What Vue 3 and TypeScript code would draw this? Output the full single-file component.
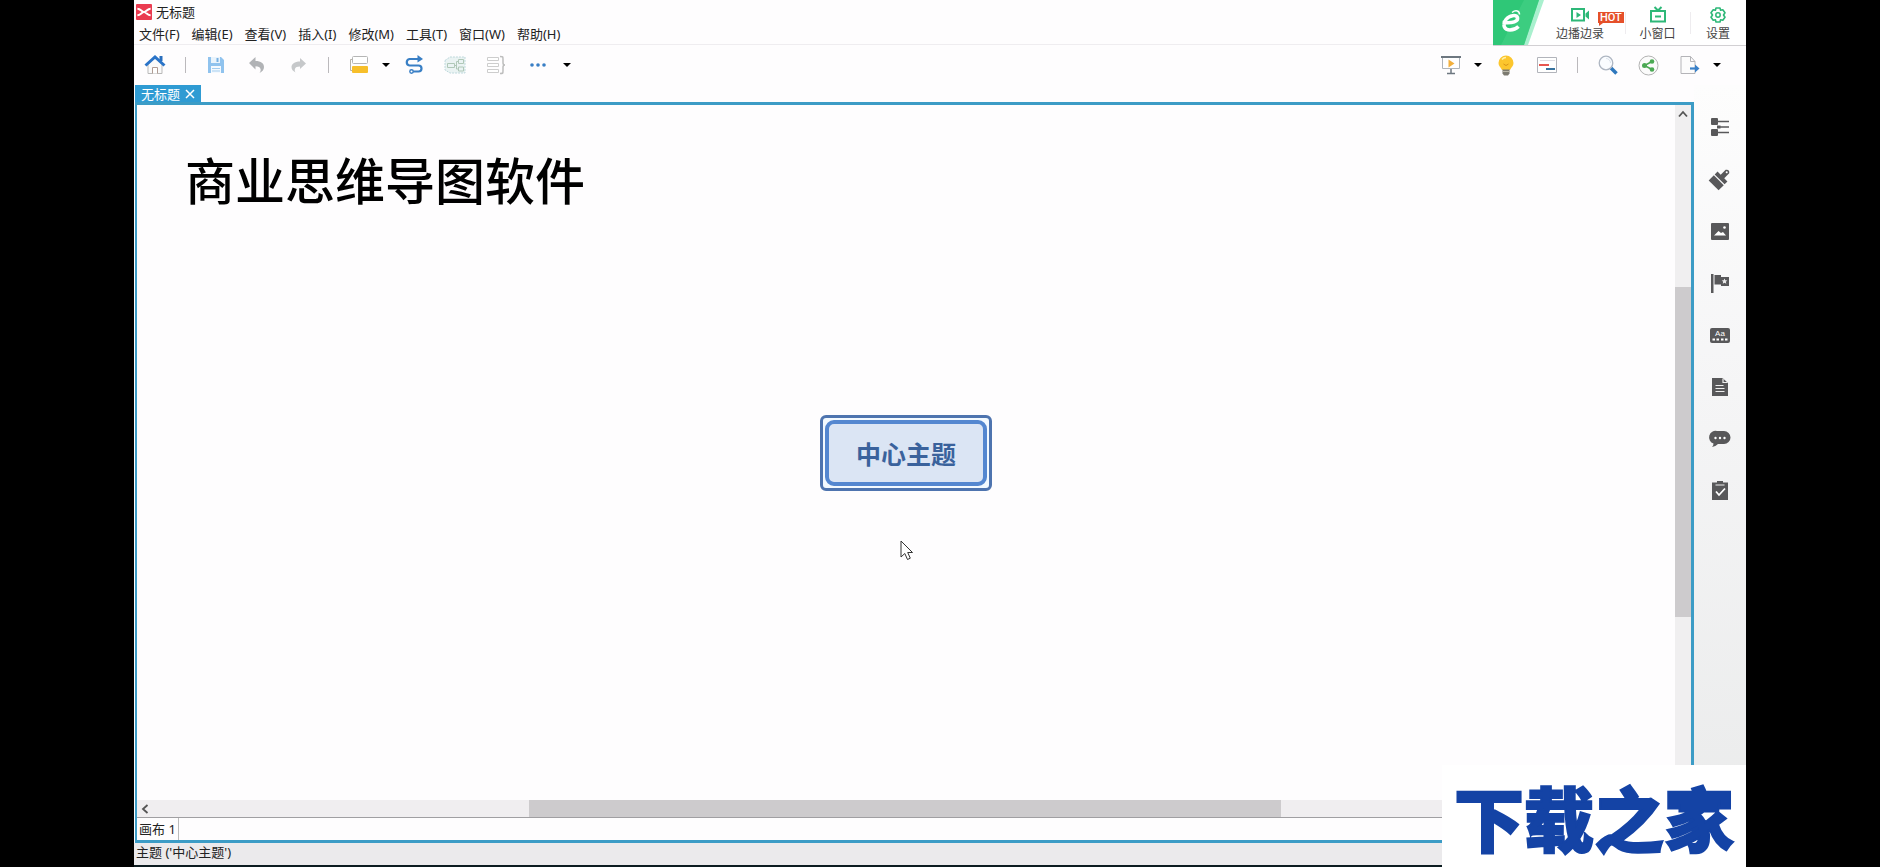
<script setup lang="ts">
interface SideTool {
  id: string
  label: string
}

const menus: string[] = ['文件(F)', '编辑(E)', '查看(V)', '插入(I)', '修改(M)', '工具(T)', '窗口(W)', '帮助(H)']

const sideTools: SideTool[] = [
  { id: 'outline', label: '大纲' },
  { id: 'format', label: '格式' },
  { id: 'image', label: '图片' },
  { id: 'marker', label: '图标' },
  { id: 'label', label: '标签' },
  { id: 'note', label: '备注' },
  { id: 'comment', label: '批注' },
  { id: 'task', label: '任务' },
]
</script>

<template>
  <div class="screen">
    <div class="window">
      <header class="titlebar">
        <svg class="logo" viewBox="0 0 17 17" aria-hidden="true">
          <rect width="17" height="17" rx="1" fill="#ea3b50" />
          <path d="M1.500 5C5 5 6 8.500 8.500 8.500S12 5 15.500 5M1.500 12C5 12 6 8.500 8.500 8.500S12 12 15.500 12" fill="none" stroke="#fff" stroke-width="2.200" />
        </svg>
        <span>无标题</span>
      </header>

      <nav class="menubar" aria-label="菜单">
        <button v-for="menu in menus" :key="menu" type="button">{{ menu }}</button>
      </nav>

      <div class="toolbar">
        <button class="tool" type="button" aria-label="主页">
          <svg width="22" height="22" viewBox="0 0 22 22">
            <path d="M4 10v9.500h14V10L11 4z" fill="#fafafa" stroke="#b9b9b9" />
            <path d="M8.500 19.500v-6h5v6" fill="#fff" stroke="#b09c94" />
            <path d="M15.500 2h3v5h-3z" fill="#2a6fbd" />
            <path d="M1.500 11.500 11 3l9.500 8.500" fill="none" stroke="#2a74c8" stroke-width="3" />
          </svg>
        </button>
        <span class="sep"></span>
        <button class="tool" type="button" aria-label="保存">
          <svg width="18" height="18" viewBox="0 0 18 18">
            <path d="M1 1h13l3 3v13H1z" fill="#90c3ee" />
            <path d="M4 1h9v6H4z" fill="#eaf4fc" />
            <path d="M9.500 2h2v4h-2z" fill="#78b1e2" />
            <path d="M4 10h10v7H4z" fill="#f4f9fe" />
            <path d="M5 12.500h8M5 15h8" stroke="#a3cdef" />
          </svg>
        </button>
        <button class="tool" type="button" aria-label="撤销">
          <svg width="18" height="18" viewBox="0 0 18 18">
            <path d="M1 7 7.500 1v4C13 5 16 7.500 16 11c0 2.500-1.500 4.500-4.500 6 1-1.500 1.500-2.500 1-4-.5-1.800-2-2.800-5-2.800V13.500z" fill="#b1b3b6" />
          </svg>
        </button>
        <button class="tool" type="button" aria-label="重做">
          <svg width="18" height="18" viewBox="0 0 18 18">
            <path d="M17 7.500 11 2v3.500C5.500 5.500 2.500 8 2.500 11c0 2.500 1.500 4 4 5.500-.8-1.500-1-2.500-.5-3.700.6-1.500 2-2.300 5-2.300V13z" fill="#c6c8ca" />
          </svg>
        </button>
        <span class="sep"></span>
        <button class="tool" type="button" aria-label="主题">
          <svg width="20" height="20" viewBox="0 0 20 20">
            <path d="M3 4.500H1.500v11H3" fill="none" stroke="#b7b3a9" />
            <rect x="3.500" y="1.500" width="15" height="7" rx="1" fill="#fff" stroke="#b5b5b5" />
            <rect x="3" y="11" width="16" height="7" rx="1" fill="#f7bf2b" />
          </svg>
        </button>
        <button class="drop" type="button" aria-label="主题选项"><svg width="8" height="4" viewBox="0 0 8 4"><path d="M0 0h8L4 4z" /></svg></button>
        <button class="tool" type="button" aria-label="联系">
          <svg width="20" height="20" viewBox="0 0 20 20">
            <path d="M14 4H5.500a3.300 3.300 0 0 0 0 6.500h9a3 3 0 0 1 0 6H9" fill="none" stroke="#397fc5" stroke-width="2.200" />
            <path d="m13.500 0 5.500 4-5.500 3.500z" fill="#397fc5" />
            <circle cx="7.500" cy="16.500" r="1.700" fill="#fff" stroke="#397fc5" stroke-width="1.400" />
          </svg>
        </button>
        <button class="tool" type="button" aria-label="外框">
          <svg width="22" height="18" viewBox="0 0 22 18">
            <path d="M1 4.500 6 1h15v16H6l-5-3z" fill="#eaf3f3" stroke="#bed8dc" stroke-dasharray="2 1" />
            <path d="M3.500 7.500h7v4h-7zM14.500 3.500h5v4h-5zM14.500 11h5v4h-5zM10.500 9.500h2m2-4h-2V13h2" fill="none" stroke="#b0c8b8" />
          </svg>
        </button>
        <button class="tool" type="button" aria-label="概要">
          <svg width="20" height="20" viewBox="0 0 20 20">
            <path d="M1.500 2.500h11v3h-11zM1.500 8.500h11v3h-11zM1.500 14.500h11v3h-11z" fill="#fff" stroke="#cdcdcd" />
            <path d="M14 1.500c3 0 3 0 3 3V8c0 1.500.5 2 2 2-1.500 0-2 .5-2 2v3.500c0 3 0 3-3 3" fill="none" stroke="#bdbdbd" stroke-width="1.500" />
          </svg>
        </button>
        <button class="tool more" type="button" aria-label="更多">
          <svg width="16" height="4" viewBox="0 0 16 4" fill="#397fc5"><circle cx="2" cy="2" r="1.800" /><circle cx="8" cy="2" r="1.800" /><circle cx="14" cy="2" r="1.800" /></svg>
        </button>
        <button class="drop" type="button" aria-label="更多选项"><svg width="8" height="4" viewBox="0 0 8 4"><path d="M0 0h8L4 4z" /></svg></button>

        <span class="spacer"></span>

        <button class="tool" type="button" aria-label="演示">
          <svg width="20" height="20" viewBox="0 0 20 20">
            <path d="M1.500 2.500h17v11h-17z" fill="#fff" stroke="#aeb4ba" />
            <path d="M0 1h20v2H0z" fill="#6d7780" />
            <path d="M10 14v4M6 18.500h8" stroke="#6d7780" stroke-width="1.500" />
            <path d="m7.500 4.500 6 4-6 4z" fill="#f3b03d" />
          </svg>
        </button>
        <button class="drop" type="button" aria-label="演示选项"><svg width="8" height="4" viewBox="0 0 8 4"><path d="M0 0h8L4 4z" /></svg></button>
        <button class="tool" type="button" aria-label="头脑风暴">
          <svg width="18" height="21" viewBox="0 0 18 21">
            <path d="M9 .5a7.500 7.500 0 0 1 7.500 7.500c0 3-2 4-3.500 7H5C3.500 12 1.500 11 1.500 8A7.500 7.500 0 0 1 9 .5z" fill="#fcc62d" />
            <path d="M5 4.500C6 3 7.500 2.500 9 2.500" fill="none" stroke="#fff0a8" stroke-width="1.500" />
            <path d="m6.500 9 2.500 1.500L11.500 9" fill="none" stroke="#d99518" />
            <path d="M5.500 14.500h7v4L11 20.500H7l-1.500-2z" fill="#7c7a70" />
            <path d="M5.500 16.500h7" stroke="#b9b6a8" />
          </svg>
        </button>
        <button class="tool" type="button" aria-label="甘特图">
          <svg width="20" height="18" viewBox="0 0 20 18">
            <path d="M.5 1.500h19v15H.5z" fill="#fff" stroke="#b2b4bb" />
            <path d="M3 4.500h15" stroke="#dedee4" />
            <path d="M2 9h10" stroke="#e65650" stroke-width="2" />
            <path d="M9 13h9" stroke="#37739f" stroke-width="2" />
          </svg>
        </button>
        <span class="sep"></span>
        <button class="tool" type="button" aria-label="搜索">
          <svg width="20" height="20" viewBox="0 0 20 20">
            <path d="m13 13 5.500 5.500" stroke="#2f78bd" stroke-width="3.500" />
            <circle cx="8" cy="8" r="6.800" fill="#fafcff" stroke="#aeb6c2" stroke-width="1.300" />
            <path d="M8 3.500A4.500 4.500 0 0 1 12.500 8" fill="none" stroke="#dce3ec" />
          </svg>
        </button>
        <button class="tool" type="button" aria-label="分享">
          <svg width="21" height="21" viewBox="0 0 21 21">
            <circle cx="10.500" cy="10.500" r="9.500" fill="#fbfbfb" stroke="#b3b3b3" />
            <path d="M14 6.500 6.500 10.500 14 14.500" fill="none" stroke="#4ba954" stroke-width="1.500" />
            <g fill="#4ba954"><circle cx="14" cy="6.500" r="2.300" /><circle cx="6.500" cy="10.500" r="2.500" /><circle cx="14" cy="14.500" r="2.300" /></g>
          </svg>
        </button>
        <button class="tool" type="button" aria-label="导出">
          <svg width="20" height="20" viewBox="0 0 20 20">
            <path d="M1 1.500h9.500l4.500 5v12H1zM10.500 1.500v5H15" fill="#fcfcfc" stroke="#b4b4b8" />
            <path d="M10 13.500h6" stroke="#3980c8" stroke-width="2.200" />
            <path d="m15 9.500 4.500 4-4.500 4z" fill="#3980c8" />
          </svg>
        </button>
        <button class="drop" type="button" aria-label="导出选项"><svg width="8" height="4" viewBox="0 0 8 4"><path d="M0 0h8L4 4z" /></svg></button>
      </div>

      <div class="body">
        <main class="editor">
          <div class="tabs">
            <div class="tab">
              <span>无标题</span>
              <button type="button" aria-label="关闭"><svg width="8" height="8" viewBox="0 0 8 8"><path d="m0 0 8 8M8 0 0 8" stroke="#fff" stroke-width="1.500" /></svg></button>
            </div>
          </div>
          <div class="frame">
            <div class="work">
              <section class="canvas">
                <h1>商业思维导图软件</h1>
                <div class="topic"><div class="topic-inner">中心主题</div></div>
                <svg class="cursor" width="14" height="21" viewBox="0 0 14 21" aria-hidden="true">
                  <path d="M1 1v16l3.800-3.500L7.500 19.500l2.800-1.300-2.600-5.700H12.500z" fill="#fff" stroke="#333" />
                </svg>
              </section>
              <div class="vscroll">
                <button type="button" aria-label="向上滚动"><svg width="8" height="6" viewBox="0 0 8 6"><path d="m0 5.500 4-4.500 4 4.500" fill="none" stroke="#555" stroke-width="1.800" /></svg></button>
                <div class="vtrack"><div class="vbefore"></div><div class="vthumb"></div><div class="vafter"></div></div>
              </div>
            </div>
            <div class="hscroll">
              <button type="button" aria-label="向左滚动"><svg width="6" height="8" viewBox="0 0 6 8"><path d="M5.500 0 1 4l4.500 4" fill="none" stroke="#555" stroke-width="1.800" /></svg></button>
              <div class="htrack"><div class="hbefore"></div><div class="hthumb"></div><div class="hafter"></div></div>
            </div>
            <div class="sheets"><button type="button">画布 1</button></div>
          </div>
        </main>

        <aside class="side">
          <button v-for="tool in sideTools" :key="tool.id" type="button" :aria-label="tool.label">
            <svg width="20" height="20" viewBox="0 0 20 20">
              <g v-if="tool.id === 'outline'" fill="#58585a">
                <rect x="1" y="1" width="7" height="7" rx="1" /><rect x="1" y="12" width="7" height="7" rx="1" /><rect x="7" y="8.500" width="3.500" height="3" />
                <path d="M8 4.500h11M10 10h9M8 15.500h11" stroke="#58585a" stroke-width="1.500" />
              </g>
              <g v-else-if="tool.id === 'format'" transform="rotate(45 10 10)" fill="#58585a">
                <path d="M7.500-.5Q10-4 12.500-.5v7H17v4H3v-4h4.500z" /><path d="M3 11.700h14V19H3z" /><circle cx="10" cy=".5" r="1" fill="#fff" />
              </g>
              <g v-else-if="tool.id === 'image'">
                <rect x="1" y="2" width="18" height="17" rx="1" fill="#58585a" /><path d="m4 14.500 4.500-4.500 2.500 2 2-1 3 3.500z" fill="#fff" /><circle cx="14.500" cy="6.500" r="1.300" fill="#fff" />
              </g>
              <g v-else-if="tool.id === 'marker'">
                <path d="M1 1h2.500v19H1zM4.500 2H11v2h8v9h-8v-1.500H4.500z" fill="#58585a" /><path d="m14.500 5.500.8 1.800 2 .2-1.500 1.300.5 2-1.800-1-1.800 1 .5-2-1.500-1.300 2-.2z" fill="#eee" />
              </g>
              <g v-else-if="tool.id === 'label'">
                <rect y="3" width="20" height="15" rx="2" fill="#58585a" />
                <text x="10" y="11" text-anchor="middle" font-family="Liberation Sans, sans-serif" font-size="8" fill="#fff">Aa</text>
                <path d="M2.500 14.500H5m1.500 0H9m2 0h2.500m1.500 0h2.500" stroke="#fff" stroke-width="1.800" />
              </g>
              <g v-else-if="tool.id === 'note'">
                <path d="M2 1h10.500L18 6v13H2z" fill="#58585a" /><path d="M13 1.500v4h4.500M5.500 8.500h8M5.500 11.500h9M5.500 14.500h9" fill="none" stroke="#eee" stroke-width="1.200" />
              </g>
              <g v-else-if="tool.id === 'comment'">
                <path d="M7 2h7a6 6 0 0 1 0 13H8q-3 3-6 3 1.500-1.500 1.500-3.500A6.500 6.500 0 0 1 7 2z" fill="#58585a" /><g fill="#fff"><circle cx="5.500" cy="9" r="1.200" /><circle cx="10" cy="9" r="1.200" /><circle cx="14.500" cy="9" r="1.200" /></g>
              </g>
              <g v-else>
                <path d="M2 1.500h5V0h6v1.500h5V19H2z" fill="#58585a" /><path d="M5.500 4h9" stroke="#eee" /><path d="m6 10.500 3 3.500 6-6.500" fill="none" stroke="#fff" stroke-width="1.800" />
              </g>
            </svg>
          </button>
        </aside>
      </div>

      <footer class="status">主题 ('中心主题')</footer>

      <div class="recorder">
        <svg class="brand" width="51" height="45" viewBox="0 0 51 45" aria-hidden="true">
          <path d="M0 0h51L35 45H0z" fill="#a9f0ce" /><path d="M0 0h46L31 45H0z" fill="#2fc777" /><path d="m31 0 15 0L31 45 8 45z" fill="#49d38a" opacity=".5" />
          <path d="M9.500 22.500C20 23.500 25.500 21.500 24.500 17.500c-1.200-3-8-2.500-11.500 2-4 6-1.500 10.500 4 10.500 3.500 0 6-1 8.500-3.500" fill="none" stroke="#fff" stroke-width="3.500" />
          <path d="M19 12.500c4-3 7.500-1.500 7.500 2" fill="none" stroke="#fff" stroke-width="1.500" />
        </svg>
        <button class="rec wide" type="button">
          <svg width="20" height="16" viewBox="0 0 20 16"><path d="M2 2h12v11.500H2z" fill="none" stroke="#2eb878" stroke-width="2" /><path d="m6.500 5 4.500 3-4.500 3zM15.500 6.500 19 3.500v9l-3.500-3z" fill="#2eb878" /></svg>
          <span>边播边录</span>
          <b class="hot">HOT</b>
        </button>
        <button class="rec mid" type="button">
          <svg width="18" height="16" viewBox="0 0 18 16"><path d="M2 4h14v10.500H2zM5.500 0 9 3.500 12.500 0M6 9.500h6" fill="none" stroke="#2eb878" stroke-width="2" /></svg>
          <span>小窗口</span>
        </button>
        <button class="rec" type="button">
          <svg width="18" height="16" viewBox="0 0 18 16"><path d="m7 1h4l.6 2.300 2.200-.6 2.200 3L14.500 8l1.500 2.300-2.200 3-2.200-.6L11 15H7l-.6-2.300-2.200.6-2.200-3L3.500 8 2 5.700l2.200-3 2.200.6z" fill="none" stroke="#2eb878" stroke-width="1.600" stroke-linejoin="round" /><circle cx="9" cy="8" r="2.200" fill="none" stroke="#2eb878" stroke-width="1.500" /></svg>
          <span>设置</span>
        </button>
      </div>

      <div class="watermark">下载之家</div>
    </div>
  </div>
</template>

<style>
body {
  background: #000;
}
</style>

<style scoped>
.screen {
  min-height: 100vh;
  box-sizing: border-box;
  padding: 0 134px;
  background: #000;
  display: flex;
  font: 13px/18px "Noto Sans", "Noto Sans CJK SC", sans-serif;
  color: #222;
}
button {
  border: 0;
  padding: 0;
  background: none;
  font: inherit;
  color: inherit;
  display: flex;
  align-items: center;
  justify-content: center;
}
svg {
  display: block;
  overflow: visible;
}
.window {
  position: relative;
  flex: 1;
  min-width: 0;
  background: #fefdfe;
  border-bottom: 2px solid #0c1c20;
  display: flex;
  flex-direction: column;
}
.titlebar {
  height: 23px;
  padding-left: 2px;
  display: flex;
  align-items: center;
  gap: 4px;
}
.logo {
  width: 16px;
  height: 16px;
}
.menubar {
  height: 21px;
  padding-left: 5px;
  border-bottom: 1px solid #efedf0;
  display: flex;
  align-items: center;
  gap: 12px;
}
.toolbar {
  height: 40px;
  display: flex;
  align-items: center;
  padding-right: 22px;
}
.tool {
  width: 41px;
  height: 32px;
}
.tool.more {
  width: 44px;
}
.drop {
  width: 14px;
  height: 32px;
}
.sep {
  width: 20px;
  height: 16px;
  display: flex;
  justify-content: center;
}
.sep::before {
  content: "";
  width: 1px;
  background: #bbb9bc;
}
.spacer {
  flex: 1;
}
.body {
  flex: 1;
  display: flex;
}
.editor {
  flex: 1;
  min-width: 0;
  padding-left: 1px;
  display: flex;
  flex-direction: column;
}
.tabs {
  display: flex;
}
.tab {
  height: 17px;
  padding: 0 7px 0 6px;
  background: #2f9bd3;
  color: #fff;
  display: flex;
  align-items: center;
  gap: 6px;
}
.frame {
  flex: 1;
  border: solid #3c9cc6;
  border-width: 3px 3px 3px 2px;
  display: flex;
  flex-direction: column;
}
.work {
  flex: 1;
  display: flex;
}
.canvas {
  position: relative;
  flex: 1;
  display: flex;
  align-items: center;
  justify-content: center;
}
h1 {
  position: absolute;
  left: 48px;
  top: 43px;
  margin: 0;
  font: 500 50px/60px "Noto Sans CJK SC", sans-serif;
  color: #000;
}
.topic {
  border: 3px solid #4e74af;
  border-radius: 6px;
  padding: 2px;
  background: #f3faff;
}
.topic-inner {
  border: 4px solid #5487d0;
  border-radius: 9px;
  padding: 14px 27px;
  background: #dbe5f4;
  color: #3a629c;
  font: 700 25px/30px "Noto Sans CJK SC", sans-serif;
}
.cursor {
  position: absolute;
  left: calc(50% - 6px);
  top: calc(50% + 87px);
}
.vscroll {
  width: 16px;
  background: #f0eff0;
  display: flex;
  flex-direction: column;
}
.vscroll button {
  height: 17px;
}
.vtrack {
  flex: 1;
  display: flex;
  flex-direction: column;
}
.vbefore {
  flex: 165;
}
.vthumb {
  flex: 330;
  background: #cdcbcd;
}
.vafter {
  flex: 183;
}
.hscroll {
  height: 18px;
  background: #f0eef0;
  border-bottom: 1px solid #a09fa2;
  box-sizing: border-box;
  display: flex;
}
.hscroll button {
  width: 15px;
}
.htrack {
  flex: 1;
  display: flex;
}
.hbefore {
  flex: 377;
}
.hthumb {
  flex: 752;
  background: #cdcbcd;
}
.hafter {
  flex: 410;
}
.sheets {
  height: 22px;
  display: flex;
}
.sheets button {
  padding: 0 2px;
  border-right: 1px solid #bbb;
}
.side {
  width: 52px;
  padding-top: 16px;
  background: linear-gradient(#fdfdfd, #f5f5f6 40%, #eaebeb);
  display: flex;
  flex-direction: column;
}
.side button {
  height: 52px;
}
.status {
  height: 22px;
  padding: 0 2px;
  background: #ebeaec;
}
.recorder {
  position: absolute;
  top: 0;
  right: 0;
  height: 45px;
  background: #fff;
  border: solid #d2d0d3;
  border-width: 0 0 1px;
  display: flex;
}
.rec {
  position: relative;
  width: 56px;
  flex-direction: column;
  justify-content: flex-start;
  padding-top: 7px;
  gap: 2px;
  font-size: 12px;
  color: #444;
}
.rec.wide {
  width: 72px;
  margin-right: 9px;
}
.rec.mid {
  width: 65px;
}
.rec + .rec::before {
  content: "";
  position: absolute;
  left: 0;
  top: 12px;
  width: 1px;
  height: 22px;
  background: #eeecef;
}
.hot {
  position: absolute;
  left: 54px;
  top: 12px;
  padding: 0 2px;
  background: #e5502a;
  color: #fff;
  font: 500 11px/11px Roboto, sans-serif;
}
.hot::after {
  content: "";
  position: absolute;
  left: 1px;
  top: 100%;
  border: solid transparent;
  border-width: 0 4px 3px 0;
  border-top: 3px solid #e5502a;
}
.watermark {
  position: absolute;
  right: 0;
  bottom: -2px;
  width: 304px;
  height: 102px;
  background: #fff;
  color: #1443a5;
  font: 900 70px/104px "Noto Sans CJK SC", sans-serif;
  -webkit-text-stroke: 2px #1443a5;
  text-align: center;
}
</style>
